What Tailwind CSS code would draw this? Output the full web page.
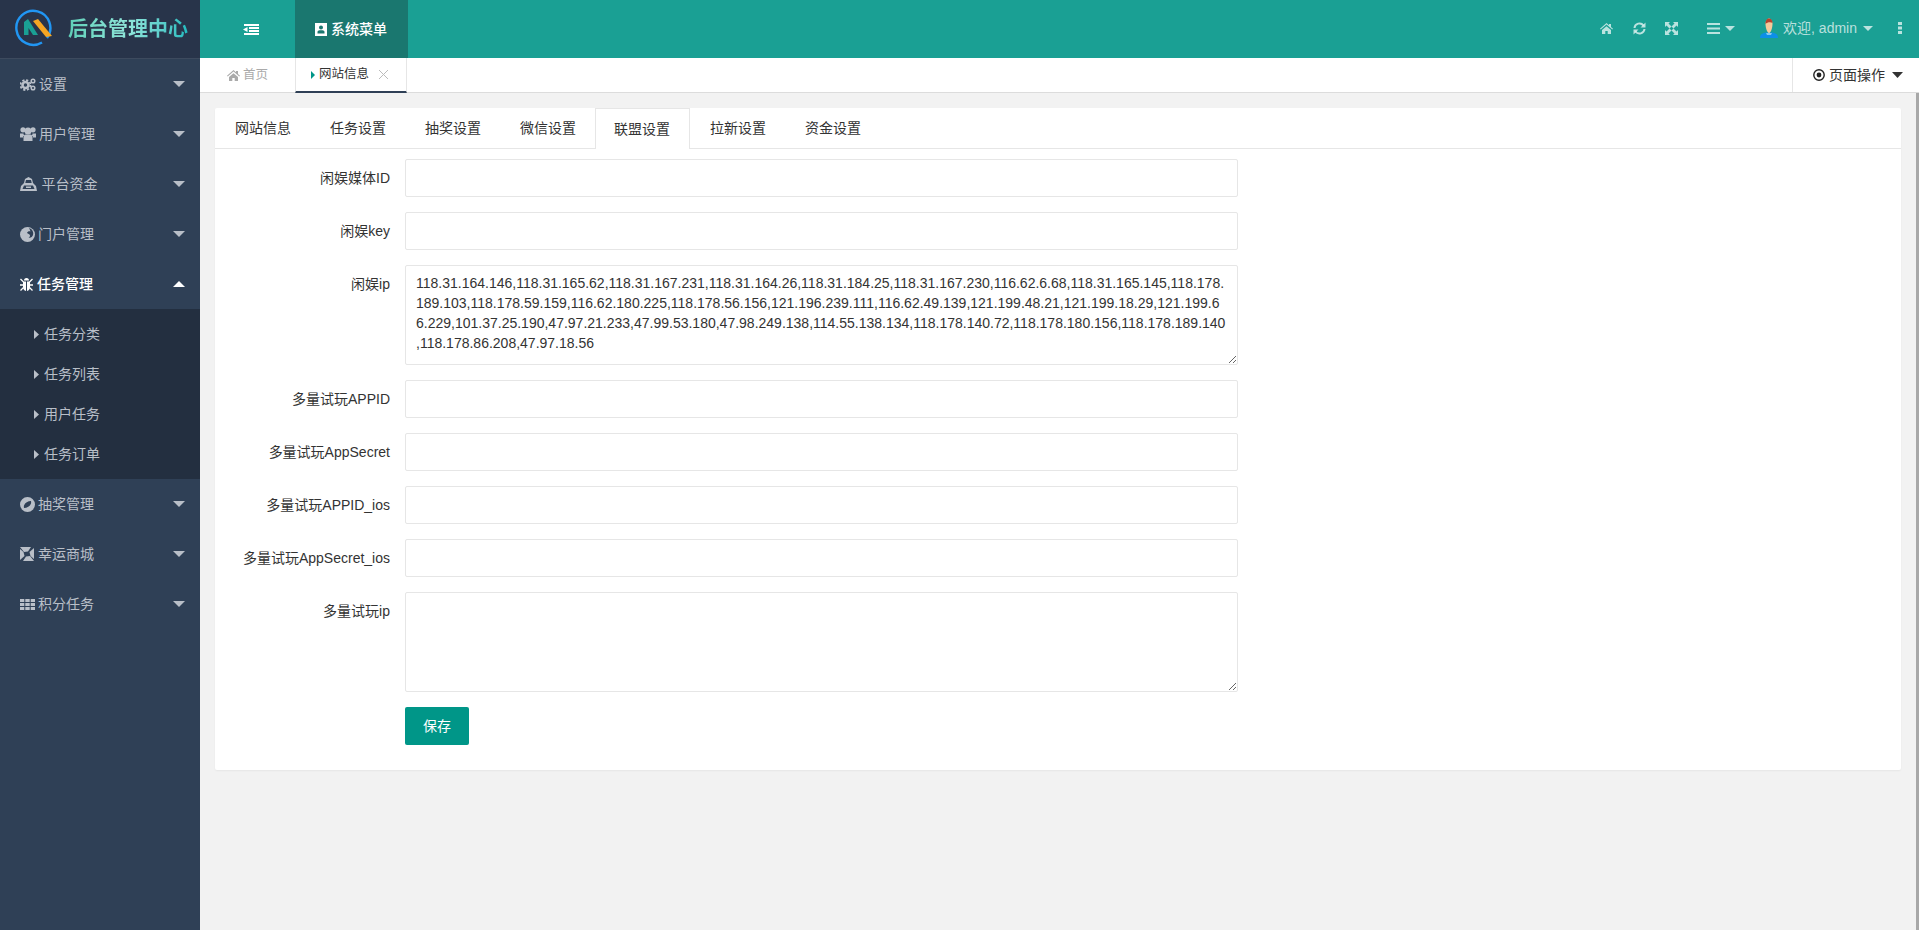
<!DOCTYPE html>
<html lang="zh-CN">
<head>
    <meta charset="UTF-8">
    <title>后台管理中心</title>
    <script src="https://cdn.jsdelivr.net/npm/@tailwindcss/browser@4"></script>
</head>
<body class="h-screen overflow-hidden flex bg-[#f2f2f2] text-[14px] text-[#333] font-['Liberation_Sans','Noto_Sans_CJK_SC',sans-serif]">

    <!-- sidebar -->
    <aside class="w-[200px] shrink-0 h-full flex flex-col bg-[#2f4056] text-[#b9bfc8]">
        <div class="h-[59px] shrink-0 flex items-center bg-[#28344a] border-b border-[#3d4a5e]">
            <svg class="ml-[14px] w-[40px] h-[40px] shrink-0" viewBox="0 0 40 40">
                <path d="M28 33.500A17 17 0 1 1 33 29" fill="none" stroke="#2196f3" stroke-width="2.400"/>
                <path d="M10 13l4-3 10 16h-5l-4.500-7v7H10z" fill="#1aa094"/>
                <path d="M19 12l5-2 14 17-6 1z" fill="#f5a623"/>
            </svg>
            <span class="ml-[14px] text-[20px] font-bold bg-linear-to-r from-[#5fcfb8] via-[#8fe6da] to-[#1fbcc0] bg-clip-text text-transparent">后台管理中心</span>
        </div>

        <a class="h-[50px] flex items-center pl-[20px] pr-[15px]">
            <svg class="w-[16px] h-[13px] mr-[3px]" viewBox="0 0 16 13" fill="none" stroke="currentColor"><circle cx="5.500" cy="7" r="3" stroke-width="2.600"/><circle cx="5.500" cy="7" r="5" stroke-width="1.800" stroke-dasharray="2.200 1.730"/><circle cx="13" cy="3" r="1.800" stroke-width="1.500"/><circle cx="13" cy="10" r="1.800" stroke-width="1.500"/></svg>
            <span>设置</span>
            <svg class="ml-auto w-[12px] h-[6px]" viewBox="0 0 12 6" fill="currentColor"><path d="M0 0h12L6 6z"/></svg>
        </a>
        <a class="h-[50px] flex items-center pl-[20px] pr-[15px]">
            <svg class="w-[16px] h-[14px] mr-[3px]" viewBox="0 0 16 14" fill="currentColor"><circle cx="3" cy="2.800" r="2.600"/><circle cx="13" cy="2.800" r="2.600"/><circle cx="8" cy="4" r="3.500"/><path d="M0 10.500V6.500h3.500L4 9H3v1.500zM16 10.500V6.500h-3.500L12 9h1v1.500zM3.500 14V10c0-1.500 1-2.500 2-2.500h5c1 0 2 1 2 2.500v4z"/></svg>
            <span>用户管理</span>
            <svg class="ml-auto w-[12px] h-[6px]" viewBox="0 0 12 6" fill="currentColor"><path d="M0 0h12L6 6z"/></svg>
        </a>
        <a class="h-[50px] flex items-center pl-[20px] pr-[15px]">
            <svg class="w-[17px] h-[14px] mr-[4.500px]" viewBox="0 0 17 14" fill="currentColor"><path fill-rule="evenodd" d="M8.500 0L12 2l1 4 3 3 1 5H0l1-5 3-3 1-4zM6 3l-.7 3h6.400L11 3zM4 8.500L2.500 12h12L13 8.500zM6 9.500h5V11H6z"/></svg>
            <span>平台资金</span>
            <svg class="ml-auto w-[12px] h-[6px]" viewBox="0 0 12 6" fill="currentColor"><path d="M0 0h12L6 6z"/></svg>
        </a>
        <a class="h-[50px] flex items-center pl-[20px] pr-[15px]">
            <svg class="w-[15px] h-[15px] mr-[3px]" viewBox="0 0 15 15"><circle cx="7.500" cy="7.500" r="7.500" fill="currentColor"/><path fill="#2f4056" d="M9 1c3 1 5 4 4 7-.5 2-2.500 3-4.500 2.500C10 10 10.500 8.500 9.500 7.500L7 6c.5-1.500 2-2 3.500-1.500C10 3 9.500 2 9 1z"/></svg>
            <span>门户管理</span>
            <svg class="ml-auto w-[12px] h-[6px]" viewBox="0 0 12 6" fill="currentColor"><path d="M0 0h12L6 6z"/></svg>
        </a>
        <a class="h-[50px] flex items-center pl-[20px] pr-[15px] text-white">
            <svg class="w-[13px] h-[14px] mr-[4px]" viewBox="0 0 13 14" fill="currentColor"><path d="M4 3.500a2.500 2.500 0 0 1 5 0zM3 4.500h3V14c-2-.5-3-2-3-4zM7 4.500h3V10c0 2-1 3.500-3 4z"/><path d="M.5 2l3 3M12.500 2l-3 3M0 8h3.500M13 8H9.500M.5 13.500l3-3M12.500 13.500l-3-3" stroke="currentColor" stroke-width="1.300"/></svg>
            <span class="font-medium">任务管理</span>
            <svg class="ml-auto w-[12px] h-[6px]" viewBox="0 0 12 6" fill="currentColor"><path d="M0 6h12L6 0z"/></svg>
        </a>

        <div class="py-[5px] bg-[#232f40]">
            <a class="h-[40px] flex items-center pl-[34px]">
                <svg class="w-[5px] h-[9px] mr-[5px]" viewBox="0 0 5 9" fill="currentColor"><path d="M0 0l5 4.500L0 9z"/></svg>
                <span>任务分类</span>
            </a>
            <a class="h-[40px] flex items-center pl-[34px]">
                <svg class="w-[5px] h-[9px] mr-[5px]" viewBox="0 0 5 9" fill="currentColor"><path d="M0 0l5 4.500L0 9z"/></svg>
                <span>任务列表</span>
            </a>
            <a class="h-[40px] flex items-center pl-[34px]">
                <svg class="w-[5px] h-[9px] mr-[5px]" viewBox="0 0 5 9" fill="currentColor"><path d="M0 0l5 4.500L0 9z"/></svg>
                <span>用户任务</span>
            </a>
            <a class="h-[40px] flex items-center pl-[34px]">
                <svg class="w-[5px] h-[9px] mr-[5px]" viewBox="0 0 5 9" fill="currentColor"><path d="M0 0l5 4.500L0 9z"/></svg>
                <span>任务订单</span>
            </a>
        </div>

        <a class="h-[50px] flex items-center pl-[20px] pr-[15px]">
            <svg class="w-[15px] h-[15px] mr-[3px]" viewBox="0 0 15 15" fill="currentColor"><path fill-rule="evenodd" d="M7.500 0a7.500 7.500 0 1 1 0 15 7.500 7.500 0 0 1 0-15zM11 4C8 4.200 5 5.500 4 8.500 3.700 9.500 4 11 4 11c3-.2 6-1.500 7-4.500.3-1 0-2.500 0-2.500z"/></svg>
            <span>抽奖管理</span>
            <svg class="ml-auto w-[12px] h-[6px]" viewBox="0 0 12 6" fill="currentColor"><path d="M0 0h12L6 6z"/></svg>
        </a>
        <a class="h-[50px] flex items-center pl-[20px] pr-[15px]">
            <svg class="w-[14px] h-[14px] mr-[4px]" viewBox="0 0 14 14" fill="currentColor"><path d="M0 0h11L8 4.500 4 5zM14 1v11l-3.500-3-1-4zM14 14H3l3-4.500 4-.5zM0 13V2l3.500 3 1 4z"/></svg>
            <span>幸运商城</span>
            <svg class="ml-auto w-[12px] h-[6px]" viewBox="0 0 12 6" fill="currentColor"><path d="M0 0h12L6 6z"/></svg>
        </a>
        <a class="h-[50px] flex items-center pl-[20px] pr-[15px]">
            <svg class="w-[15px] h-[11px] mr-[3px]" viewBox="0 0 15 11" fill="currentColor"><path d="M0 0h4.300v3H0zM5.300 0h4.400v3H5.300zM10.700 0H15v3h-4.300zM0 4h4.300v3H0zM5.300 4h4.400v3H5.300zM10.700 4H15v3h-4.300zM0 8h4.300v3H0zM5.300 8h4.400v3H5.300zM10.700 8H15v3h-4.300z"/></svg>
            <span>积分任务</span>
            <svg class="ml-auto w-[12px] h-[6px]" viewBox="0 0 12 6" fill="currentColor"><path d="M0 0h12L6 6z"/></svg>
        </a>
    </aside>

    <div class="flex-1 min-w-0 h-full flex flex-col">
        <!-- top bar -->
        <header class="h-[58px] shrink-0 flex items-center bg-[#1aa094] text-white">
            <div class="w-[95px] flex justify-center pl-[7px]">
                <svg class="w-[16px] h-[11px]" viewBox="0 0 16 11" fill="currentColor"><path d="M1 0h15v2H1zM6 3h10v2H6zM6 6h10v2H6zM1 9h15v2H1z"/><path d="M0 5.500L4.500 3v5z"/></svg>
            </div>
            <div class="w-[113px] h-full flex items-center pl-[20px] bg-[#1a776f]">
                <svg class="w-[12px] h-[13px] mr-[4px]" viewBox="0 0 12 13" fill="currentColor"><path fill-rule="evenodd" d="M0 0h12v13H0zM6 2.500a2 2 0 1 0 0 4 2 2 0 0 0 0-4zM2.500 10.500h7V9c0-1-1-1.800-2-1.800h-3c-1 0-2 .8-2 1.800z"/></svg>
                <span class="font-medium">系统菜单</span>
            </div>
            <div class="ml-auto flex items-center pb-[2px] text-white/70">
                <svg class="w-[13px] h-[11px] mr-[20px]" viewBox="0 0 13 11" fill="currentColor"><path d="M6.500 0l2.500 2.200V1h2v3l2 1.800-.7.700-5.800-5-5.800 5L0 5.800zM2 7l4.500-3.800L11 7v4H7.700V8H5.300v3H2z"/></svg>
                <svg class="w-[13px] h-[13px] mr-[19px]" viewBox="0 0 13 13" fill="none" stroke="currentColor" stroke-width="2"><path d="M1.500 6a5 5 0 0 1 9-2.500M11.500 7a5 5 0 0 1-9 2.500"/><path d="M12.500 .5v5h-5zM.5 12.500v-5h5z" fill="currentColor" stroke="none"/></svg>
                <svg class="w-[13px] h-[13px] mr-[29px]" viewBox="0 0 13 13" fill="currentColor"><path d="M0 0h5L3.500 1.500 6.500 4.500 4.500 6.500 1.500 3.500 0 5zM13 0v5l-1.500-1.500-3 3-2-2 3-3L8 0zM0 13V8l1.500 1.500 3-3 2 2-3 3L5 13zM13 13H8l1.500-1.500-3-3 2-2 3 3L13 8z"/></svg>
                <svg class="w-[13px] h-[11px] mr-[5px]" viewBox="0 0 13 11" fill="currentColor"><path d="M0 0h13v2H0zM0 4.500h13v2H0zM0 9h13v2H0z"/></svg>
                <svg class="w-[10px] h-[5px] mr-[25px]" viewBox="0 0 10 5" fill="currentColor"><path d="M0 0h10L5 5z"/></svg>
                <svg class="w-[18px] h-[20px] mr-[5px]" viewBox="0 0 18 20"><path d="M0 20c0-3.500 2-4.500 5.500-5.500h7c3.500 1 5.500 2 5.500 5.500z" fill="#0d8fe8"/><path d="M6 15h6l-1 2H7z" fill="#7fc8f0"/><path d="M5.500 6c0-3 1.500-5.500 3.500-5.500s3.500 2.500 3.500 5.500S11 15 9 15 5.500 9 5.500 6z" fill="#f6c99a"/><path d="M5.500 6C5.500 2 7 .5 9 .5s3.500 1.500 3.500 4.500C11 3.500 7 4 5.500 6z" fill="#b5432f"/></svg>
                <span class="mr-[6px]">欢迎, admin</span>
                <svg class="w-[10px] h-[5px] mr-[25px]" viewBox="0 0 10 5" fill="currentColor"><path d="M0 0h10L5 5z"/></svg>
                <svg class="w-[4px] h-[12px] mr-[17px]" viewBox="0 0 4 12" fill="currentColor"><path d="M0 0h4v3H0zM0 4.500h4v3H0zM0 9h4v3H0z"/></svg>
            </div>
        </header>

        <!-- page tabs -->
        <nav class="h-[35px] shrink-0 flex bg-white border-b border-[#dcdcdc]">
            <a class="w-[95px] flex items-center pl-[27px] text-[12.500px] text-[#aaa]">
                <svg class="w-[13px] h-[11px] mr-[3px]" viewBox="0 0 13 11" fill="currentColor"><path d="M6.500 0l2.500 2.200V1h2v3l2 1.800-.7.700-5.800-5-5.800 5L0 5.800zM2 7l4.500-3.800L11 7v4H7.700V8H5.300v3H2z"/></svg>
                <span>首页</span>
            </a>
            <a class="w-[112px] h-[35px] flex items-center pl-[15px] text-[12.500px] text-[#333] border-x border-[#e6e6e6] border-b-2 border-b-[#2f4056]">
                <svg class="w-[4px] h-[8px] mr-[4px]" viewBox="0 0 4 8" fill="#009688"><path d="M0 0l4 4-4 4z"/></svg>
                <span>网站信息</span>
                <svg class="w-[9px] h-[9px] ml-[10px]" viewBox="0 0 9 9" fill="none" stroke="#bbb"><path d="M0 0l9 9M9 0L0 9"/></svg>
            </a>
            <a class="ml-auto w-[127px] flex items-center pl-[20px] border-l border-[#e6e6e6]">
                <svg class="w-[12px] h-[12px] mr-[4px]" viewBox="0 0 12 12" fill="#222"><circle cx="6" cy="6" r="5.200" fill="none" stroke="#222" stroke-width="1.400"/><circle cx="6" cy="6" r="2.400"/></svg>
                <span>页面操作</span>
                <svg class="w-[11px] h-[6px] ml-[7px]" viewBox="0 0 11 6" fill="#333"><path d="M0 0h11L5.500 6z"/></svg>
            </a>
        </nav>

        <div class="flex-1 min-h-0 flex">
            <main class="flex-1 min-w-0 p-[15px]">
                <div class="h-[662px] bg-white rounded-[2px] shadow-[0_1px_2px_rgba(0,0,0,0.05)]">
                    <ul class="h-[41px] flex gap-px pl-px border-b border-[#e6e6e6]">
                        <li class="w-[94px] text-center leading-[40px]">网站信息</li>
                        <li class="w-[94px] text-center leading-[40px]">任务设置</li>
                        <li class="w-[94px] text-center leading-[40px]">抽奖设置</li>
                        <li class="w-[94px] text-center leading-[40px]">微信设置</li>
                        <li class="w-[95px] -ml-px pr-px h-[41px] text-center leading-[40px] bg-white border-x border-t border-[#e6e6e6]">联盟设置</li>
                        <li class="w-[94px] text-center leading-[40px]">拉新设置</li>
                        <li class="w-[94px] text-center leading-[40px]">资金设置</li>
                    </ul>

                    <form class="pt-[10px] flex flex-col gap-[15px]">
                        <div class="flex gap-[15px]">
                            <label class="w-[175px] text-right leading-[36px] pt-px">闲娱媒体ID</label>
                            <input class="w-[833px] h-[38px] px-[10px] border border-[#e6e6e6] rounded-[2px] outline-none">
                        </div>
                        <div class="flex gap-[15px]">
                            <label class="w-[175px] text-right leading-[36px] pt-px">闲娱key</label>
                            <input class="w-[833px] h-[38px] px-[10px] border border-[#e6e6e6] rounded-[2px] outline-none">
                        </div>
                        <div class="flex gap-[15px]">
                            <label class="w-[175px] text-right leading-[36px] pt-px">闲娱ip</label>
                            <textarea class="w-[833px] h-[100px] px-[10px] py-[7px] text-[14px] leading-[20px] border border-[#e6e6e6] rounded-[2px] outline-none">118.31.164.146,118.31.165.62,118.31.167.231,118.31.164.26,118.31.184.25,118.31.167.230,116.62.6.68,118.31.165.145,118.178.189.103,118.178.59.159,116.62.180.225,118.178.56.156,121.196.239.111,116.62.49.139,121.199.48.21,121.199.18.29,121.199.66.229,101.37.25.190,47.97.21.233,47.99.53.180,47.98.249.138,114.55.138.134,118.178.140.72,118.178.180.156,118.178.189.140,118.178.86.208,47.97.18.56</textarea>
                        </div>
                        <div class="flex gap-[15px]">
                            <label class="w-[175px] text-right leading-[36px] pt-px">多量试玩APPID</label>
                            <input class="w-[833px] h-[38px] px-[10px] border border-[#e6e6e6] rounded-[2px] outline-none">
                        </div>
                        <div class="flex gap-[15px]">
                            <label class="w-[175px] text-right leading-[36px] pt-px">多量试玩AppSecret</label>
                            <input class="w-[833px] h-[38px] px-[10px] border border-[#e6e6e6] rounded-[2px] outline-none">
                        </div>
                        <div class="flex gap-[15px]">
                            <label class="w-[175px] text-right leading-[36px] pt-px">多量试玩APPID_ios</label>
                            <input class="w-[833px] h-[38px] px-[10px] border border-[#e6e6e6] rounded-[2px] outline-none">
                        </div>
                        <div class="flex gap-[15px]">
                            <label class="w-[175px] text-right leading-[36px] pt-px">多量试玩AppSecret_ios</label>
                            <input class="w-[833px] h-[38px] px-[10px] border border-[#e6e6e6] rounded-[2px] outline-none">
                        </div>
                        <div class="flex gap-[15px]">
                            <label class="w-[175px] text-right leading-[36px] pt-px">多量试玩ip</label>
                            <textarea class="w-[833px] h-[100px] px-[10px] py-[7px] text-[14px] leading-[20px] border border-[#e6e6e6] rounded-[2px] outline-none"></textarea>
                        </div>
                        <div class="pl-[190px]">
                            <button type="button" class="w-[64px] h-[38px] bg-[#009688] text-white rounded-[2px]">保存</button>
                        </div>
                    </form>
                </div>
            </main>
            <div class="w-[3px] shrink-0 bg-[#a8a8a8]"></div>
        </div>
    </div>
</body>
</html>
